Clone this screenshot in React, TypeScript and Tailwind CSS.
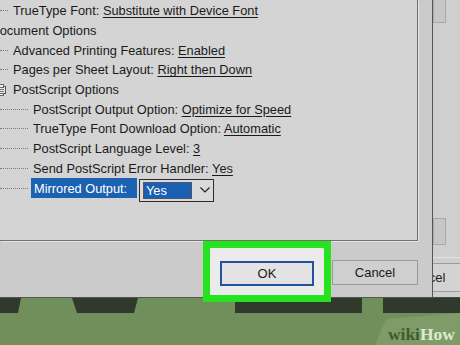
import React from "react";

type RowProps = {
  level: 0 | 1 | 2;
  label: string;
  value?: string;
  icon?: boolean;
};

function TreeIcon() {
  return (
    <svg width="14" height="14" viewBox="0 0 14 14" className="-ml-[7px] mr-[6px] shrink-0">
      <rect x="1.5" y="3.5" width="11" height="7" fill="#e6e6e6" stroke="#555" />
      <rect x="3.5" y="1.5" width="7" height="3" fill="#f4f4f4" stroke="#666" />
      <line x1="3" y1="6.5" x2="11" y2="6.5" stroke="#777" />
      <line x1="3" y1="8.5" x2="11" y2="8.5" stroke="#777" />
      <rect x="3.5" y="10.5" width="7" height="2" fill="#f4f4f4" stroke="#666" />
    </svg>
  );
}

function Row({ level, label, value, icon }: RowProps) {
  return (
    <div className="flex items-center h-[19.7px] whitespace-nowrap">
      {level === 0 && <span className="-ml-[9.5px]" />}
      {level === 1 && !icon && (
        <span className="w-[8px] mr-[5px] border-t border-dotted border-[#7c7c7c]" />
      )}
      {icon && <TreeIcon />}
      {level === 2 && (
        <span className="w-[28px] mr-[5px] border-t border-dotted border-[#7c7c7c]" />
      )}
      <span>
        {label}
        {value && (
          <>
            {" "}
            <span className="underline underline-offset-2">{value}</span>
          </>
        )}
      </span>
    </div>
  );
}

export default function App() {
  return (
    <div className="w-[460px] h-[345px] overflow-hidden bg-[#718f5b] flex flex-col font-['Liberation_Sans',Arial,sans-serif] text-[12.8px] text-[#1a1a1a]">
      <div className="flex h-[298px] shrink-0">
        {/* front dialog */}
        <div className="w-[433px] shrink-0 flex flex-col bg-[#cbcbcb] border-r border-b border-[#555]">
          <div className="w-[418px] h-[241px] shrink-0 bg-[#d4d4d4] border-r border-b border-[#707070] shadow-[1px_1px_0_#e6e6e6] pt-[1px] overflow-hidden">
            <Row level={1} label="TrueType Font:" value="Substitute with Device Font" />
            <Row level={0} label="Document Options" />
            <Row level={1} label="Advanced Printing Features:" value="Enabled" />
            <Row level={1} label="Pages per Sheet Layout:" value="Right then Down" />
            <Row level={1} icon label="PostScript Options" />
            <Row level={2} label="PostScript Output Option:" value="Optimize for Speed" />
            <Row level={2} label="TrueType Font Download Option:" value="Automatic" />
            <Row level={2} label="PostScript Language Level:" value="3" />
            <Row level={2} label="Send PostScript Error Handler:" value="Yes" />
            <div className="flex items-start h-[19.7px] whitespace-nowrap">
              <span className="w-[28px] mr-[3px] mt-[10px] border-t border-dotted border-[#7c7c7c]" />
              <span className="w-[106px] h-[20px] pl-[3px] flex items-center bg-[#1c62b3] text-white">
                Mirrored Output:
              </span>
              <div className="ml-[2px] mt-[0.5px] w-[75px] h-[23px] border border-[#2c2c2c] bg-[#dadada] flex items-start">
                <span className="ml-[3px] mt-[2px] w-[49px] h-[17px] pl-[2px] flex items-center bg-[#1a5fb2] text-white border border-dotted border-[#8a4a30]">
                  Yes
                </span>
                <svg width="10" height="6" viewBox="0 0 10 6" className="ml-[8px] mt-[7px]">
                  <path d="M0.5 0.5 L5 5 L9.5 0.5" fill="none" stroke="#222" strokeWidth="1.2" />
                </svg>
              </div>
            </div>
          </div>
          <div className="flex items-start flex-1">
            <div className="relative z-10 ml-[203px] w-[128px] h-[61px] shrink-0 border-[7px] border-[#25e31e] bg-[#ebebeb] pl-[10px] pt-[13px]">
              <div className="w-[94px] h-[25px] border-2 border-[#23529e] bg-[#e3e3e3] flex items-center justify-center text-[13px]">
                OK
              </div>
            </div>
            <div className="ml-[1px] mt-[19px] w-[86px] h-[25px] border border-[#9a9a9a] bg-[#cfcfcf] flex items-center justify-center text-[13px]">
              Cancel
            </div>
          </div>
        </div>
        {/* window behind */}
        <div className="flex-1 overflow-hidden bg-[#cfcfcf] flex flex-col border-b border-[#4a4a4a]">
          <div className="w-[13px] h-[23px] shrink-0 border-x border-b border-[#a9a9a9] bg-[#c6c6c6]" />
          <div className="mt-[195px] w-[13px] h-[27px] shrink-0 border border-[#a9a9a9] bg-[#c6c6c6]" />
          <div className="mt-[12px] h-px shrink-0 bg-[#e4e4e4]" />
          <div className="mt-[5px] h-[29px] shrink-0 border-y border-[#9c9c9c] bg-[#d3d3d3] flex items-center whitespace-nowrap text-[13px]">
            <span className="-ml-[28px]">Cancel</span>
          </div>
        </div>
      </div>
      {/* desk background */}
      <div className="relative flex-1 flex items-end justify-end pr-[5px] pb-[2px]">
        <svg width="460" height="47" viewBox="0 0 460 47" className="absolute inset-0">
          <polygon points="375,47 386,21 460,15 460,47" fill="#7f9c68" />
          <polygon points="0,0 21,0 18,15 0,15" fill="#2f3a2d" />
          <polygon points="72,0 138,0 134,15 77,15" fill="#2f3a2d" />
          <rect x="235" y="0" width="127" height="15" fill="#2f3a2d" />
          <rect x="383" y="0" width="77" height="15" fill="#2f3a2d" />
        </svg>
        <span className="relative font-['Liberation_Serif',serif] font-bold text-[17.5px] leading-none">
          <span className="text-[#3d5c30]">wiki</span>
          <span className="text-[#dcebcf]">How</span>
        </span>
      </div>
    </div>
  );
}
